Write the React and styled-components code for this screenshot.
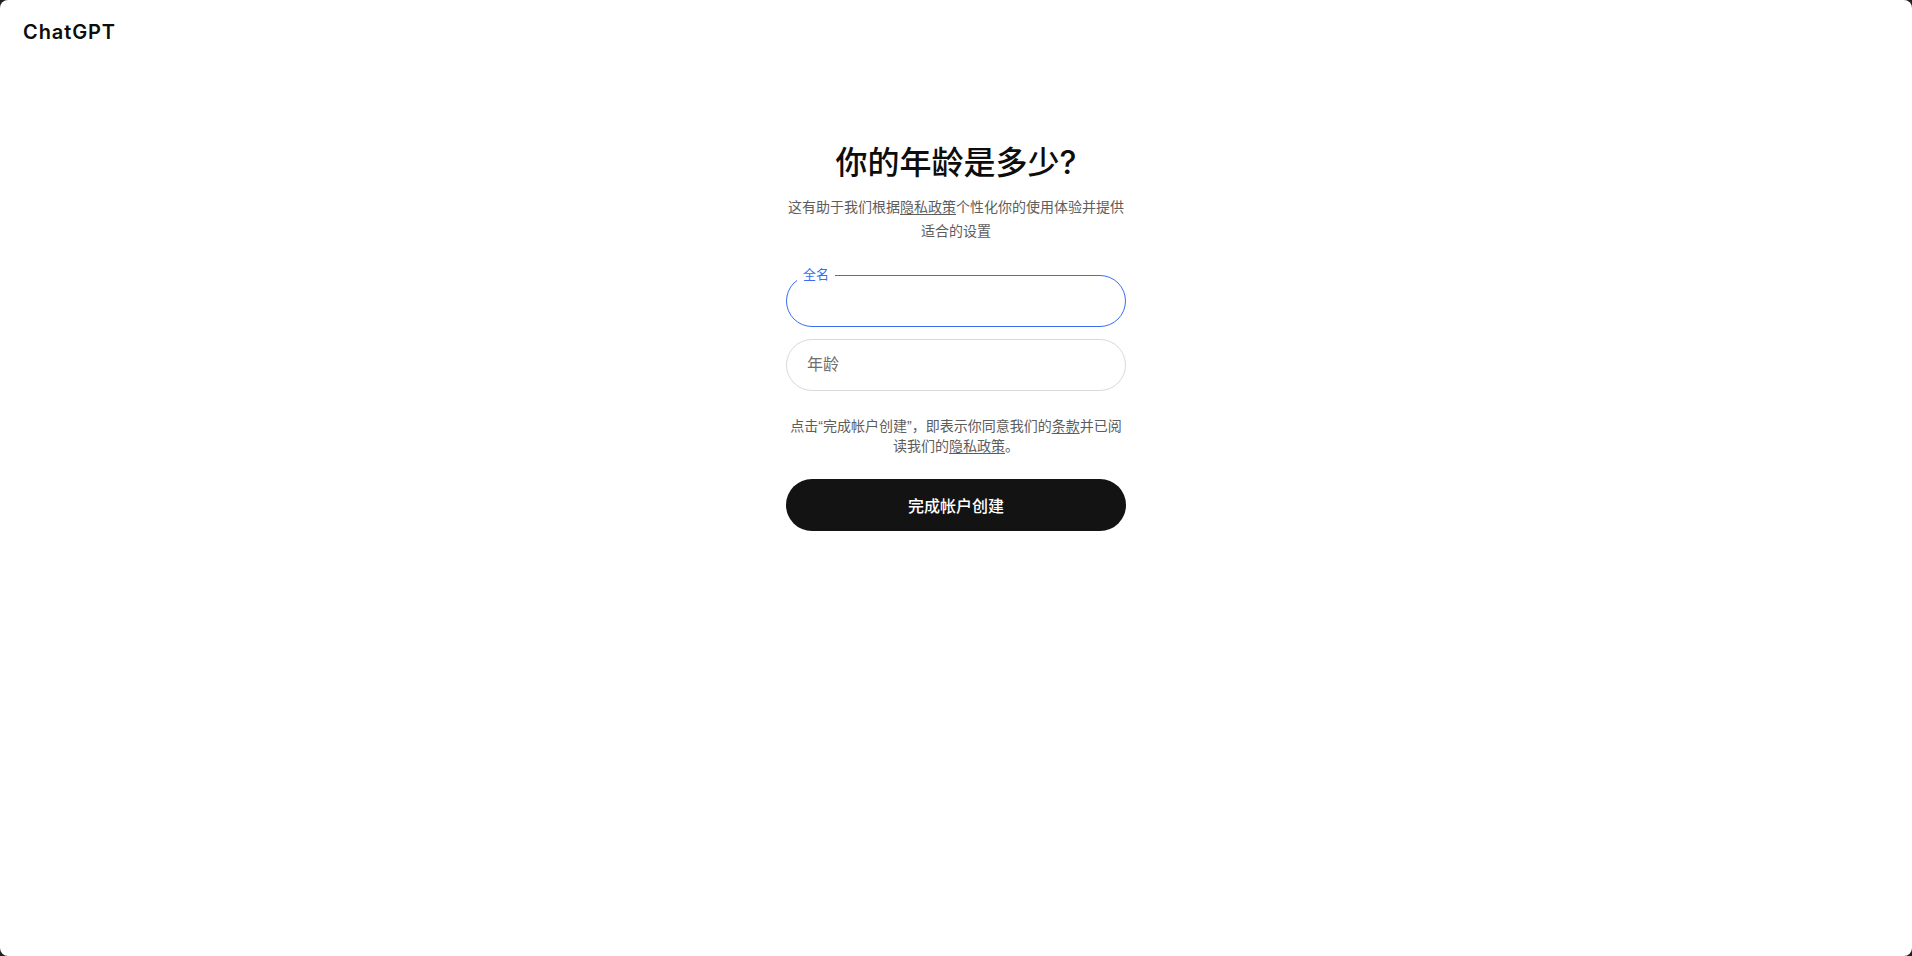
import React, { useState } from "react";
import styled, { createGlobalStyle, css } from "styled-components";

const GlobalStyle = createGlobalStyle`
  html, body {
    margin: 0;
    padding: 0;
    background: #1f1f1f;
  }
  * {
    box-sizing: border-box;
  }
`;

function App() {
  const [name, setName] = useState("");
  const [age, setAge] = useState("");

  return (
    <>
      <GlobalStyle />
      <Shell>
        <Header>
          <Logo>ChatGPT</Logo>
        </Header>
        <Main>
          <Form onSubmit={(e) => e.preventDefault()}>
            <Title>你的年龄是多少?</Title>
            <Subtitle>
              这有助于我们根据<Link>隐私政策</Link>个性化你的使用体验并提供适合的设置
            </Subtitle>
            <Fields>
              <Field focused>
                <FloatLabel>全名</FloatLabel>
                <Input
                  value={name}
                  onChange={(e) => setName(e.target.value)}
                  autoFocus
                />
              </Field>
              <Field>
                <Input
                  placeholder="年龄"
                  value={age}
                  onChange={(e) => setAge(e.target.value)}
                />
              </Field>
            </Fields>
            <Terms>
              点击“完成帐户创建”，即表示你同意我们的<Link>条款</Link>并已阅读我们的
              <Link>隐私政策</Link>。
            </Terms>
            <SubmitButton type="submit">完成帐户创建</SubmitButton>
          </Form>
        </Main>
      </Shell>
    </>
  );
}

export default App;

const Shell = styled.div`
  height: 100vh;
  background: #fff;
  border-radius: 8px;
  display: flex;
  flex-direction: column;
  font-family: "Liberation Sans", "Noto Sans CJK SC", sans-serif;
  color: #0d0d0d;
`;
const Header = styled.header`
  padding: 20px 23px 0;
`;
const Logo = styled.div`
  font-family: Inter, "Liberation Sans", sans-serif;
  font-weight: 600;
  font-size: 20px;
  line-height: 24px;
  letter-spacing: 0.9px;
`;
const Main = styled.main`
  display: flex;
  justify-content: center;
  padding-top: 99px;
`;
const Form = styled.form`
  width: 340px;
  display: flex;
  flex-direction: column;
  align-items: center;
`;
const Title = styled.h1`
  margin: 0;
  font-family: Inter, "Noto Sans CJK SC", sans-serif;
  font-size: 32px;
  line-height: 40px;
  font-weight: 500;
  text-align: center;
`;
const Subtitle = styled.p`
  margin: 12px 0 0;
  font-size: 14px;
  line-height: 24px;
  color: #5d5d5d;
  text-align: center;
`;
const Link = styled.a`
  color: #5d5d5d;
  text-decoration: underline;
  text-underline-offset: 2px;
  cursor: pointer;
`;
const Fields = styled.div`
  width: 100%;
  margin-top: 32px;
  display: flex;
  flex-direction: column;
  gap: 12px;
`;
const Field = styled.div`
  position: relative;
  height: 52px;
  border-radius: 26px;
  border: 1px solid #d9d9d9;
  ${(props) =>
    props.focused &&
    css`
      border-color: #3a6cf4;
    `};
`;
const FloatLabel = styled.span`
  position: absolute;
  top: -9px;
  left: 10px;
  padding: 0 6px;
  background: #fff;
  color: #3a6cf4;
  font-size: 13px;
  line-height: 16px;
`;
const Input = styled.input`
  width: 100%;
  height: 100%;
  border: none;
  outline: none;
  background: transparent;
  padding: 0 20px;
  font-family: inherit;
  font-size: 16px;
  color: #0d0d0d;
  &::placeholder {
    color: #6e6e6e;
  }
`;
const Terms = styled.p`
  margin: 25px 0 0;
  font-size: 14px;
  line-height: 20px;
  color: #5d5d5d;
  text-align: center;
`;
const SubmitButton = styled.button`
  margin-top: 23px;
  width: 100%;
  height: 52px;
  border: none;
  border-radius: 26px;
  background: #131313;
  color: #fff;
  font-family: inherit;
  font-size: 16px;
  font-weight: 500;
  cursor: pointer;
`;
